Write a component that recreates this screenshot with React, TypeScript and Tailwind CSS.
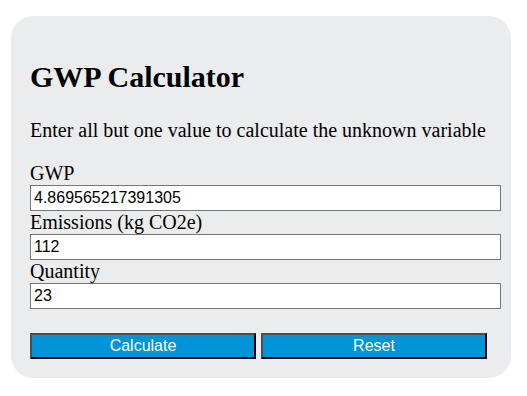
export default function App() {
  const fields = [
    { label: "GWP", value: "4.869565217391305" },
    { label: "Emissions (kg CO2e)", value: "112" },
    { label: "Quantity", value: "23" },
  ];
  return (
    <div className="w-[527px] h-[396px] bg-white pt-[16px] pl-[11px]">
      <div
        className="w-[500px] h-[362px] bg-[#ebeced] rounded-[22px] pl-[19px] pt-[44px]"
        style={{ fontFamily: '"Liberation Serif", "Times New Roman", serif' }}
      >
        <h1 className="text-[30px] leading-[34px] font-bold text-black h-[34px]">GWP Calculator</h1>
        <p className="text-[20px] leading-[23px] text-black mt-[25px] h-[23px] whitespace-nowrap">
          Enter all but one value to calculate the unknown variable
        </p>
        <div className="mt-[20px] flex flex-col">
          {fields.map((f) => (
            <div key={f.label} className="flex flex-col">
              <label className="text-[20px] leading-[22px] h-[22px] text-black whitespace-nowrap">{f.label}</label>
              <input
                readOnly
                value={f.value}
                className="mt-[1px] w-[471px] h-[26px] bg-white border border-[#767676] px-[3px] text-[16px] text-black outline-none"
                style={{ fontFamily: '"Liberation Sans", Arial, sans-serif' }}
              />
            </div>
          ))}
        </div>
        <div
          className="mt-[24px] flex gap-[5px]"
          style={{ fontFamily: '"Liberation Sans", Arial, sans-serif' }}
        >
          <button className="w-[226px] h-[26px] bg-[#0095d9] text-white text-[16px] leading-[20px] border-2 border-t-[#4d4d4d] border-l-[#4d4d4d] border-b-black border-r-black">
            Calculate
          </button>
          <button className="w-[226px] h-[26px] bg-[#0095d9] text-white text-[16px] leading-[20px] border-2 border-t-[#4d4d4d] border-l-[#4d4d4d] border-b-black border-r-black">
            Reset
          </button>
        </div>
      </div>
    </div>
  );
}
